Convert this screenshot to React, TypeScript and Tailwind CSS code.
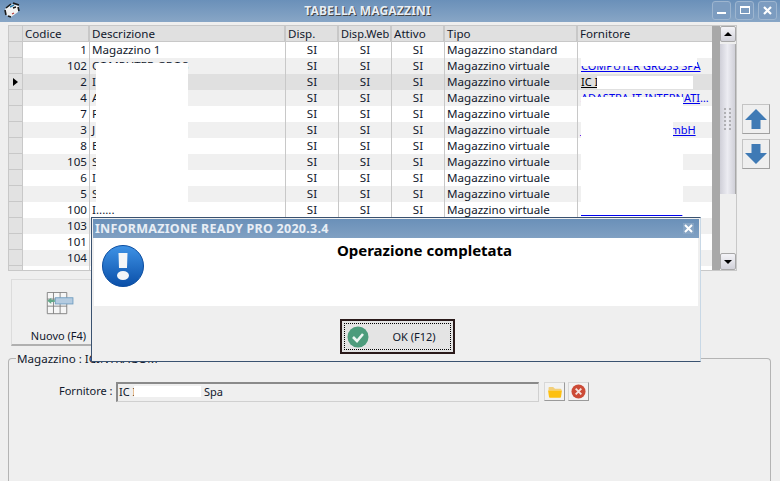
import React from 'react';

const rows = [
  { code: '1', desc: 'Magazzino 1', tipo: 'Magazzino standard', forn: '' },
  { code: '102', desc: 'COMPUTER GROS', tipo: 'Magazzino virtuale', forn: 'COMPUTER GROSS SPA' },
  { code: '2', desc: 'I', tipo: 'Magazzino virtuale', forn: 'IC I', selected: true },
  { code: '4', desc: 'A', tipo: 'Magazzino virtuale', forn: 'ADASTRA IT INTERNATIONAL' },
  { code: '7', desc: 'F', tipo: 'Magazzino virtuale', forn: '' },
  { code: '3', desc: 'J', tipo: 'Magazzino virtuale', forn: 'Jarltech Europe GmbH' },
  { code: '8', desc: 'E', tipo: 'Magazzino virtuale', forn: '' },
  { code: '105', desc: 'S', tipo: 'Magazzino virtuale', forn: '' },
  { code: '6', desc: 'I', tipo: 'Magazzino virtuale', forn: '' },
  { code: '5', desc: 'S', tipo: 'Magazzino virtuale', forn: '' },
  { code: '100', desc: 'I......', tipo: 'Magazzino virtuale', forn: 'INTERNAZIONALE S' },
  { code: '103', desc: '', tipo: 'Magazzino virtuale', forn: '' },
  { code: '101', desc: '', tipo: 'Magazzino virtuale', forn: '' },
  { code: '104', desc: '', tipo: 'Magazzino virtuale', forn: '' },
  { code: '106', desc: '', tipo: 'Magazzino virtuale', forn: '' },
];

function ArrowButton({ up }: { up?: boolean }) {
  return (
    <div className="w-[28px] h-[30px] bg-[#efefef] border border-[#c4c4c4] border-r-[#a0a0a0] border-b-[#a0a0a0] flex items-center justify-center">
      <svg width="22" height="20" viewBox="0 0 22 20" className={up ? '' : 'rotate-180'}>
        <path d="M11 0 L22 11 H15.5 V20 H6.5 V11 H0 Z" fill="#3f7ab5" />
      </svg>
    </div>
  );
}

function TitleButton({ children }: { children: React.ReactNode }) {
  return (
    <div className="w-[19px] h-[19px] rounded-[3px] border border-[#9db5cf] bg-[#7c9cc0] flex items-center justify-center">
      {children}
    </div>
  );
}

export default function App() {
  return (
    <div className="relative w-[780px] h-[481px] overflow-hidden bg-[#efefef] text-[11.6px] leading-[16px] text-[#10182c] font-['Noto_Sans','Liberation_Sans',sans-serif]">
      {/* title bar */}
      <div className="h-[22px] bg-gradient-to-b from-[#6a90b9] to-[#88a6c6] flex items-center pl-[4px] pr-[3px]">
        <svg width="16" height="16" viewBox="0 0 16 16" className="-mt-[3px]">
          <path d="M1 7 L8 2 L15 4 L14 10 L7 15 L2 13 Z" fill="#f2f2f2" />
          <path d="M2 6 L7 2 M9 1 L15 3 M14 5 L15 9 M1 8 L2 13 M4 14 L7 15" stroke="#1a1a1a" strokeWidth="1.6" fill="none" />
          <path d="M6 5 L10 3" stroke="#2f7fb0" strokeWidth="1.4" />
          <path d="M9 6 L12 5" stroke="#1a1a1a" strokeWidth="1.4" />
          <path d="M8 12 L10 11" stroke="#b03030" strokeWidth="1.2" />
        </svg>
        <div className="flex-1 text-center font-bold text-[12px] tracking-[0.2px] text-[#e8eef5] [text-shadow:1px_1px_0_#444] pl-[3px]">TABELLA MAGAZZINI</div>
        <div className="flex gap-[4px] -mt-[2px]">
          <TitleButton><div className="w-[9px] h-[2px] bg-white mt-[5px]" /></TitleButton>
          <TitleButton><div className="w-[10px] h-[8px] border border-t-2 border-white" /></TitleButton>
          <TitleButton>
            <svg width="9" height="9" viewBox="0 0 9 9"><path d="M1 1 L8 8 M8 1 L1 8" stroke="#fff" strokeWidth="2.2" /></svg>
          </TitleButton>
        </div>
      </div>

      {/* grid + arrows */}
      <div className="flex pl-[8px] pt-[3px]">
        <div className="relative w-[729px] h-[246px] border border-[#c8c8c8] flex overflow-hidden">
          <div className="w-[703px] flex flex-col shrink-0">
            <div className="flex h-[16px] shrink-0 bg-[#e0e0e0] border-b border-[#c8c8c8]">
              <div className="w-[14px] border-r border-[#c8c8c8]" />
              <div className="w-[67px] pl-[2px] border-r-2 border-[#c8c8c8]">Codice</div>
              <div className="w-[196px] pl-[2px] border-r-2 border-[#c8c8c8]">Descrizione</div>
              <div className="w-[53px] pl-[2px] border-r-2 border-[#c8c8c8]">Disp.</div>
              <div className="w-[53px] pl-[2px] border-r-2 border-[#c8c8c8] text-[11px]">Disp.Web</div>
              <div className="w-[53px] pl-[2px] border-r-2 border-[#c8c8c8]">Attivo</div>
              <div className="w-[133px] pl-[2px] border-r-2 border-[#c8c8c8]">Tipo</div>
              <div className="w-[134px] pl-[2px]">Fornitore</div>
            </div>
            {rows.map((r, i) => (
              <div
                key={r.code}
                className={`flex h-[16px] shrink-0 ${r.selected ? 'bg-[#e0e0e0]' : i % 2 === 1 ? 'bg-[#f0f0f0]' : 'bg-white'}`}
              >
                <div className="w-[14px] bg-[#e2e2e2] border-r border-b border-[#c8c8c8] flex items-center pl-[4px]">
                  {r.selected && <div className="border-y-[4px] border-y-transparent border-l-[5px] border-l-black" />}
                </div>
                <div className="w-[67px] pr-[2px] text-right border-r border-[#c8c8c8]">{r.code}</div>
                <div className="w-[196px] pl-[2px] border-r border-[#c8c8c8] whitespace-nowrap">{r.desc}</div>
                <div className="w-[53px] text-center border-r border-[#c8c8c8]">SI</div>
                <div className="w-[53px] text-center border-r border-[#c8c8c8]">SI</div>
                <div className="w-[53px] text-center border-r border-[#c8c8c8]">SI</div>
                <div className="w-[133px] pl-[2px] border-r border-[#c8c8c8] whitespace-nowrap">{r.tipo}</div>
                <div className={`w-[134px] pl-[3px] pr-[3px] text-[11px] underline whitespace-nowrap overflow-hidden text-ellipsis ${r.selected ? 'text-black' : 'text-[#0000ee]'}`}>{r.forn}</div>
              </div>
            ))}
          </div>

          {/* scrollbar */}
          <div className="w-[8px] shrink-0 bg-[#a8a8a8]" />
          <div className="flex-1 flex flex-col bg-[#efefef]">
            <div className="h-[16px] bg-gradient-to-b from-[#f4f4f8] to-[#d2d2da] border border-[#a8a8a8] rounded-[2px] flex items-center justify-center">
              <div className="border-x-[4px] border-x-transparent border-b-[4px] border-b-black" />
            </div>
            <div className="h-[150px] mt-[2px] bg-gradient-to-r from-[#cfcfd8] via-[#ecECF2] to-[#d0d0d8] border-r border-[#a8a8a8] flex flex-col items-center justify-center">
              <div className="grid grid-cols-2 gap-x-[3px] gap-y-[2px]">
                {Array.from({ length: 12 }).map((_, i) => (
                  <div key={i} className="w-[2px] h-[2px] bg-[#b0b0b4]" />
                ))}
              </div>
            </div>
            <div className="flex-1" />
            <div className="h-[17px] bg-gradient-to-b from-[#f4f4f8] to-[#d2d2da] border border-[#a8a8a8] rounded-[2px] flex items-center justify-center">
              <div className="border-x-[4px] border-x-transparent border-t-[4px] border-t-black" />
            </div>
          </div>

          {/* blanked-out cells */}
          <div className="absolute left-[87px] top-[37px] w-[92px] h-[139px] bg-white" />
          <div className="absolute left-[572px] top-[32px] w-[116px] h-[8px] bg-white" />
          <div className="absolute left-[588px] top-[50px] w-[96px] h-[13px] bg-white" />
          <div className="absolute left-[572px] top-[71px] w-[92px] h-[117px] bg-white" />
          <div className="absolute left-[664px] top-[71px] w-[10px] h-[25px] bg-white" />
          <div className="absolute left-[664px] top-[112px] w-[10px] h-[76px] bg-white" />
        </div>
        <div className="flex flex-col gap-[5px] pl-[5px] pt-[79px]">
          <ArrowButton up />
          <ArrowButton />
        </div>
      </div>

      {/* toolbar */}
      <div className="pl-[11px] pt-[8px]">
        <div className="w-[94px] h-[67px] border border-[#dcdcdc] border-r-0 border-b-2 border-b-[#b0b0b0] flex flex-col items-center">
          <svg width="32" height="26" viewBox="0 0 32 26" className="mt-[12px] ml-[4px]">
            <path d="M0.5 0.5 H22.5 V24.5 H0.5 Z M0.5 8 H22.5 M0.5 16 H22.5 M7.5 0.5 V24.5 M15 0.5 V24.5" fill="#f6f6f6" stroke="#7c7c7c" />
            <rect x="9.5" y="6.5" width="20" height="7" fill="#b4cbe0" stroke="#6f9cc0" />
            <path d="M0.5 10 L5 6.5 V8.8 H9 V11.2 H5 V13.5 Z" fill="#63a98a" />
          </svg>
          <div className="mt-[13px] text-[11px] text-[#10182c] whitespace-nowrap">Nuovo (F4)</div>
        </div>
      </div>

      {/* group box */}
      <div className="relative mx-[8px] mt-[12px] h-[130px] w-[763px] border-l border-t border-r border-[#b4b4b4] rounded-t-[4px]">
        <div className="absolute left-[7px] top-[-8px] bg-[#efefef] px-px whitespace-nowrap">Magazzino : ICINTRAGOM</div>
        <div className="flex items-start pl-[50px] pt-[23px] text-[11px]">
          <span className="w-[57px] pt-[1px]">Fornitore :</span>
          <div className="relative w-[423px] h-[20px] border border-[#d0d0d0] border-t-2 border-l-2 border-t-[#8a8a8a] border-l-[#8a8a8a] pl-px">
            IC I
            <div className="absolute left-[16px] top-[2px] w-[67px] h-[11px] bg-white" />
            <span className="absolute left-[86px] top-0">Spa</span>
          </div>
          <div className="ml-[5px] w-[21px] h-[19px] bg-[#f2f2f2] border border-[#d8d8d8] border-r-[#9a9a9a] border-b-[#9a9a9a] flex items-center justify-center">
            <svg width="16" height="12" viewBox="0 0 16 13">
              <path d="M1 2 Q1 1 2 1 H6 L8 3 H14 Q15 3 15 4 V5 H1 Z" fill="#f2cf7a" />
              <path d="M0.5 5 H15.5 L14.5 12 Q14.4 12.6 13.5 12.6 H2.5 Q1.6 12.6 1.5 12 Z" fill="#fdc012" />
            </svg>
          </div>
          <div className="ml-[3px] w-[21px] h-[19px] bg-[#f2f2f2] border border-[#d8d8d8] border-r-[#9a9a9a] border-b-[#9a9a9a] flex items-center justify-center">
            <svg width="15" height="15" viewBox="0 0 16 16">
              <circle cx="8" cy="8" r="7.5" fill="#cc4b37" />
              <path d="M5 5 L11 11 M11 5 L5 11" stroke="#f4e4e0" strokeWidth="2" />
            </svg>
          </div>
        </div>
      </div>

      {/* message dialog */}
      <div className="absolute left-[91px] top-[217px] w-[610px] h-[145px] bg-[#efefef] border border-[#3a5270] border-r-[#c8d8e6] border-b-[#3a5270] flex flex-col">
        <div className="h-[19px] mx-px mt-px bg-gradient-to-b from-[#6a90b9] to-[#80a0c2] flex items-center pl-[2px] pr-[5px] shrink-0">
          <div className="flex-1 font-bold text-[12.5px] tracking-[0.25px] text-[#e8eef5] whitespace-nowrap">INFORMAZIONE READY PRO 2020.3.4</div>
          <div className="w-[11px] h-[11px] flex items-center justify-center bg-[#86a4c4]">
            <svg width="9" height="9" viewBox="0 0 9 9"><path d="M1 1 L8 8 M8 1 L1 8" stroke="#fff" strokeWidth="2" /></svg>
          </div>
        </div>
        <div className="relative h-[68px] mx-[2px] bg-white shrink-0">
          <div className="absolute left-[8px] top-[7px]">
            <svg width="42" height="42" viewBox="0 0 42 42">
              <defs>
                <linearGradient id="info" x1="0" y1="0" x2="0" y2="1">
                  <stop offset="0" stopColor="#3f93e6" />
                  <stop offset="1" stopColor="#0a4fa8" />
                </linearGradient>
              </defs>
              <circle cx="21" cy="21" r="20.5" fill="url(#info)" stroke="#0b4da0" />
              <path d="M16.5 8 H25.5 L25 23 H17 Z" fill="#f4f6f8" />
              <ellipse cx="21" cy="30.5" rx="6" ry="4.5" fill="#f4f6f8" />
            </svg>
          </div>
          <div className="text-center font-bold text-[15px] leading-[20px] text-black pt-[2px] pl-[57px]">Operazione completata</div>
        </div>
        <div className="flex-1 flex justify-center pt-[13px] pl-[2px]">
          <div className="w-[115px] h-[35px] border-2 border-[#2a1a1a] bg-[#e4e4e4] p-[2px]">
            <div className="h-full border border-dotted border-black flex items-center pl-[2px]">
              <svg width="22" height="22" viewBox="0 0 22 22">
                <circle cx="11" cy="11" r="10.5" fill="#4d9c7c" />
                <path d="M6 11 L10 15 L16 8" fill="none" stroke="#eef6f2" strokeWidth="2.6" />
              </svg>
              <span className="ml-[24px] text-[11px]">OK (F12)</span>
            </div>
          </div>
        </div>
      </div>
    </div>
  );
}
